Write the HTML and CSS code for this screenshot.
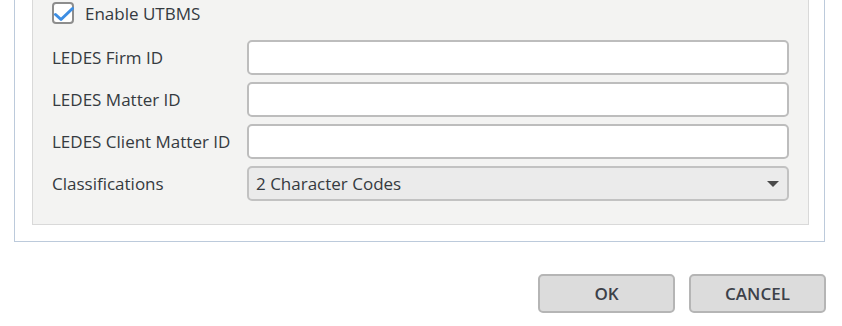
FILE: index.html
```html
<!doctype html>
<html lang="en">
  <head>
    <meta charset="UTF-8" />
    <meta name="viewport" content="width=device-width, initial-scale=1.0" />
    <title>LEDES Settings</title>
    <link rel="stylesheet" href="styles.css">
  </head>
  <body>
    <div class="dialog">
      <div class="panel">
        <label class="check-row">
          <span class="checkbox">
            <svg width="22" height="22" viewBox="0 0 22 22">
              <path d="M3.5 12.5 L9 17.5 L20.5 6.5" fill="none" stroke="#3d8ee3" stroke-width="3" stroke-linecap="round" stroke-linejoin="round" />
            </svg>
          </span>
          Enable UTBMS
        </label>

        <div class="form">
          <div class="label">LEDES Firm ID</div>
          <input class="field" type="text" />

          <div class="label">LEDES Matter ID</div>
          <input class="field" type="text" />

          <div class="label">LEDES Client Matter ID</div>
          <input class="field" type="text" />

          <div class="label">Classifications</div>
          <div class="select">
            <span>2 Character Codes</span>
            <span class="arrow"></span>
          </div>
        </div>
      </div>
    </div>

    <div class="footer">
      <button class="btn">OK</button>
      <button class="btn">CANCEL</button>
    </div>
  </body>
</html>
```

FILE: styles.css
```css
body {
  font-family: 'Open Sans', 'Noto Sans', sans-serif;
  font-size: 17px;
  color: #353a40;
  margin: 0;
  background: #ffffff;
  overflow: hidden;
  height: 326px;
}
.dialog {
  margin: -40px 17px 0 14px;
  padding: 15px 15px 16px 17px;
  border: 1px solid #bccadb;
  border-top: none;
}
.panel {
  background: #f3f3f2;
  border: 1px solid #d9d9d9;
  padding: 26px 19px 23px 19px;
}
.check-row {
  display: flex;
  align-items: center;
  gap: 11px;
  height: 22px;
  margin-bottom: 16px;
}
.checkbox {
  position: relative;
  width: 18px;
  height: 18px;
  border: 2px solid #8d8d8d;
  border-radius: 4px;
  background: #ffffff;
}
.checkbox svg {
  position: absolute;
  left: -2px;
  top: -2px;
}
.form {
  display: grid;
  grid-template-columns: 195px 1fr;
  row-gap: 7px;
  align-items: center;
}
.field {
  height: 35px;
  box-sizing: border-box;
  border: 2px solid #bdbdbd;
  border-radius: 5px;
  background: #ffffff;
  margin: 0;
  font: inherit;
}
.select {
  height: 35px;
  box-sizing: border-box;
  border: 2px solid #c2c2c2;
  border-radius: 5px;
  background: #ebebeb;
  display: flex;
  align-items: center;
  justify-content: space-between;
  padding: 0 8px 0 7px;
}
.arrow {
  width: 0;
  height: 0;
  border-left: 6px solid transparent;
  border-right: 6px solid transparent;
  border-top: 6px solid #4a4a4a;
}
.footer {
  display: flex;
  justify-content: flex-end;
  gap: 14px;
  margin-top: 32px;
  padding-right: 16px;
}
.btn {
  width: 137px;
  height: 39px;
  background: #dcdcdc;
  border: 2px solid #b5b5b5;
  border-radius: 5px;
  font-family: 'Open Sans', 'Noto Sans', sans-serif;
  font-size: 17px;
  font-weight: 600;
  color: #3c4149;
}
```
